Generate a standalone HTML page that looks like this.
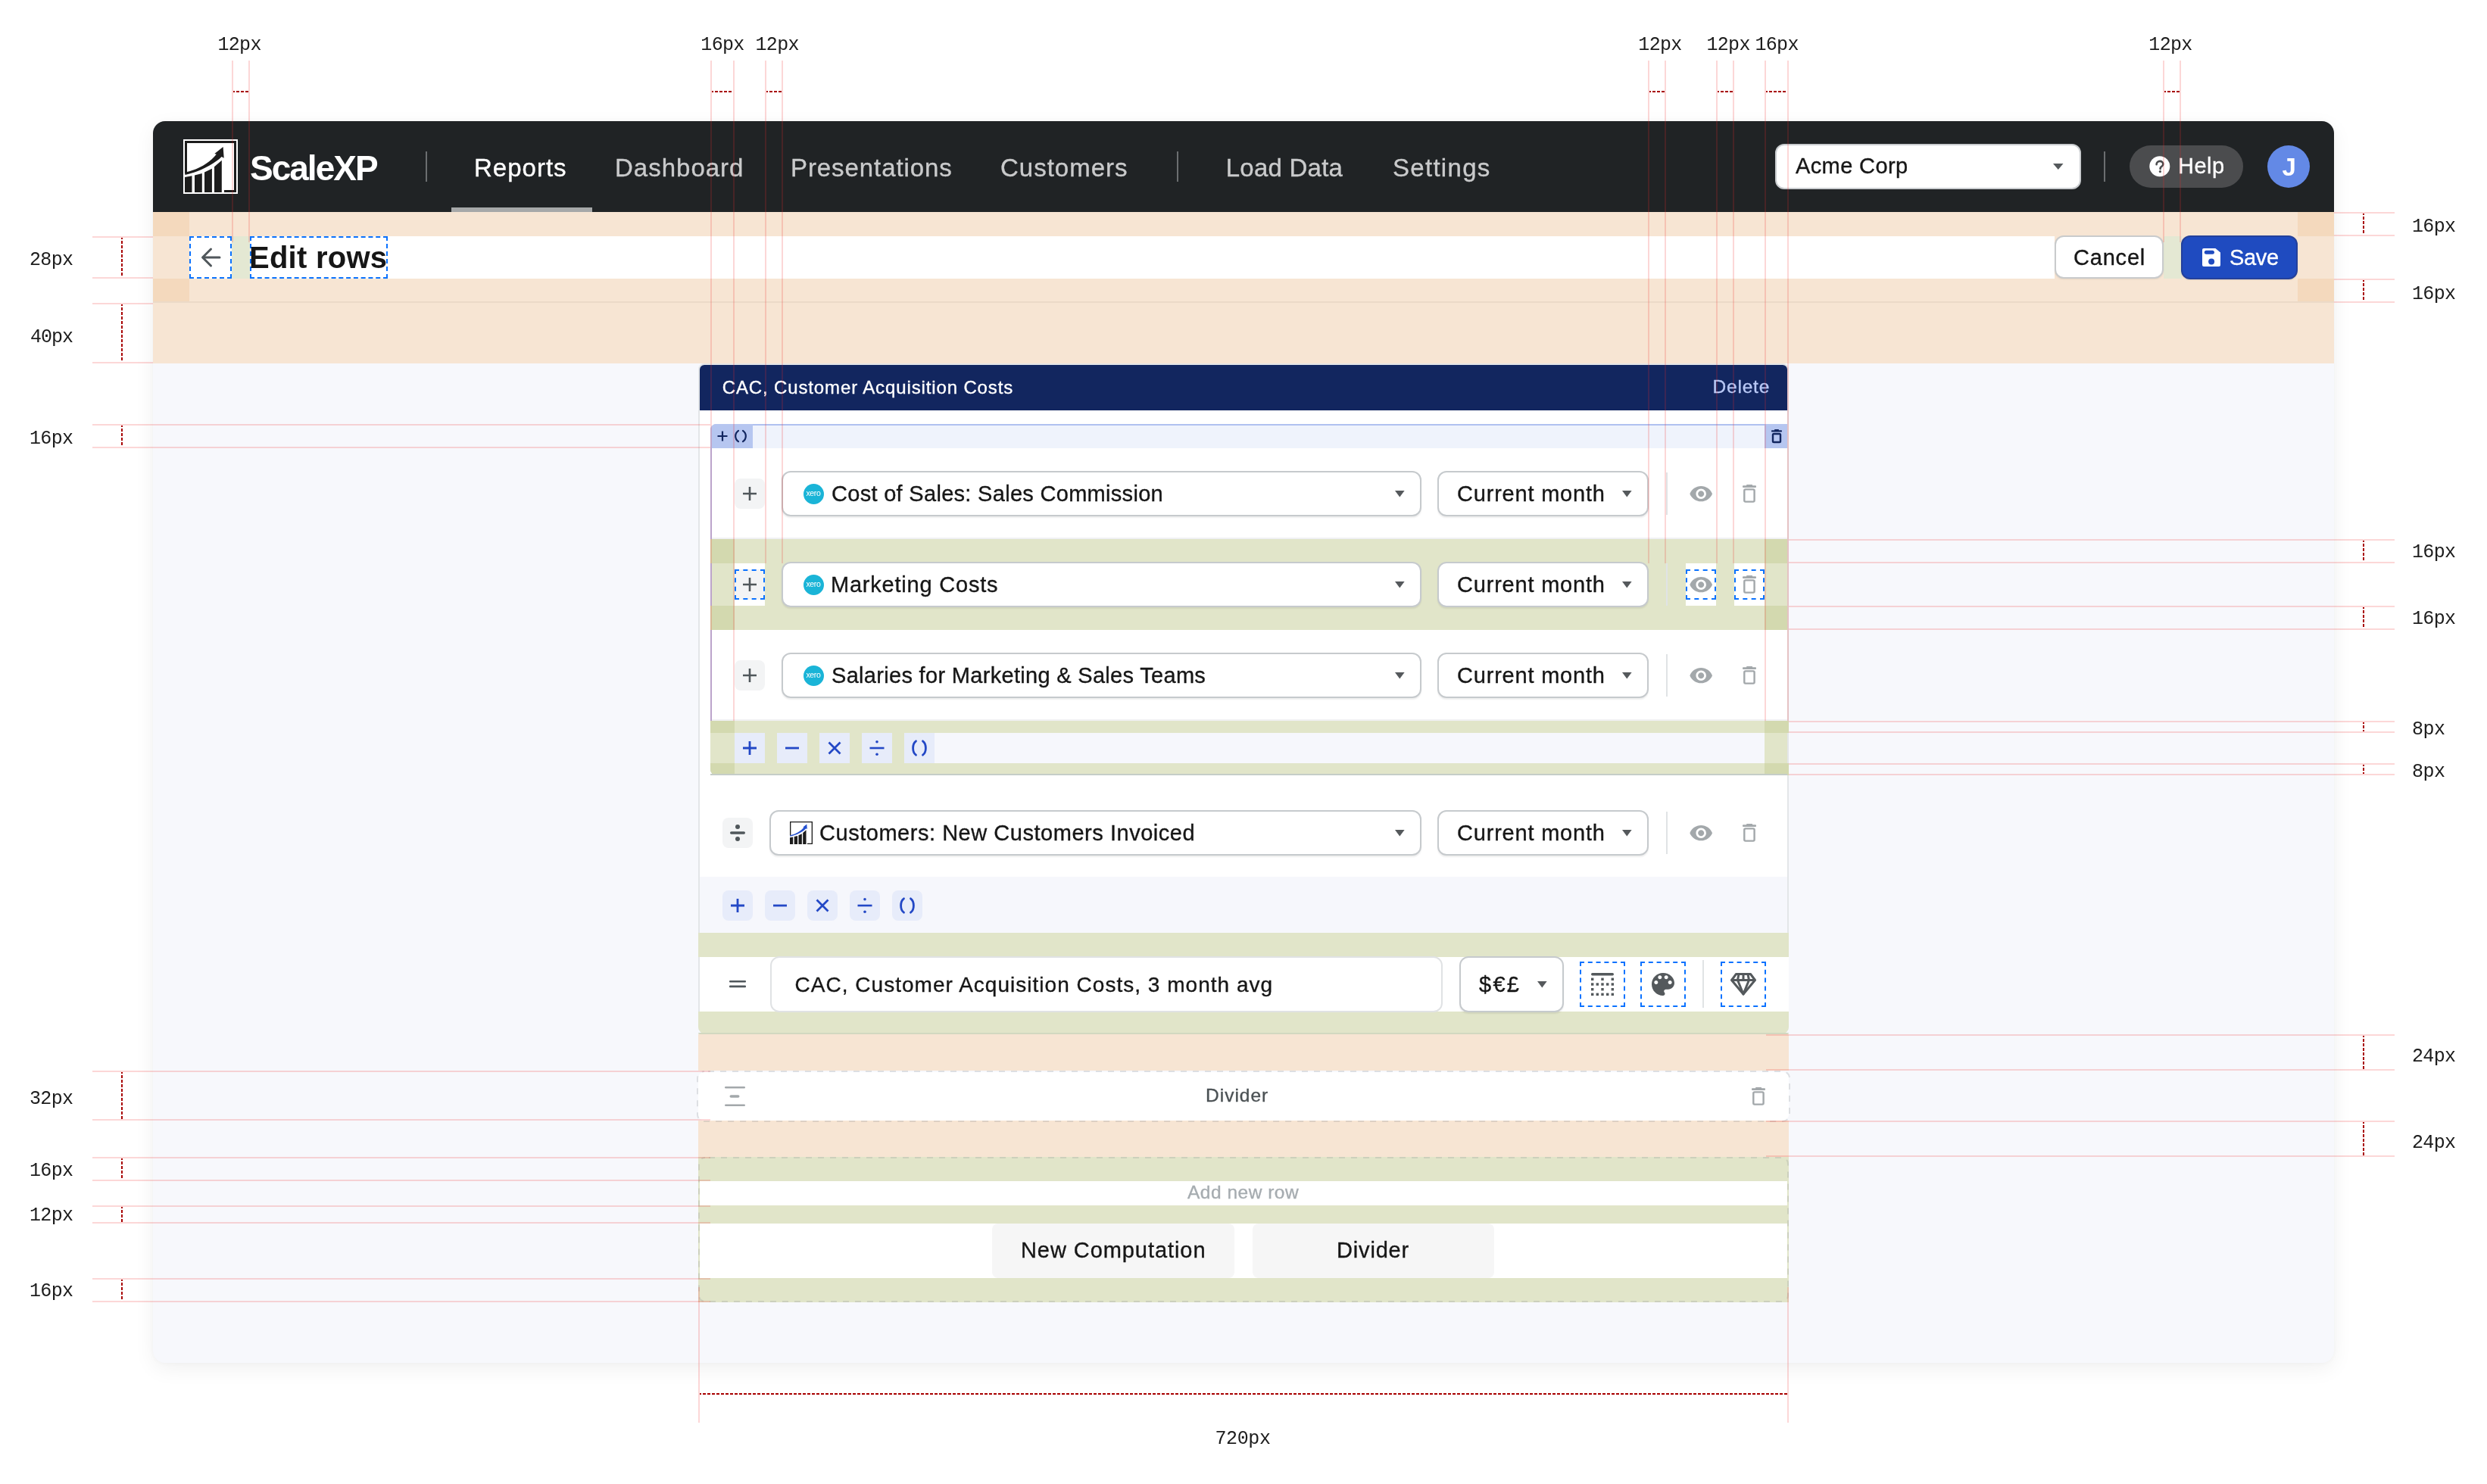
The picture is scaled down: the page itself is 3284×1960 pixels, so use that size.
<!DOCTYPE html>
<html><head><meta charset="utf-8">
<style>
html,body{margin:0;padding:0}
body{width:3284px;height:1960px;position:relative;overflow:hidden;background:#fff;font-family:"Liberation Sans",sans-serif}
.a{position:absolute}
.t{position:absolute;white-space:nowrap;line-height:1;font-family:"Liberation Sans",sans-serif}
.db{position:absolute;box-sizing:border-box;border:2px dashed #0a72ff}
svg{position:absolute;overflow:visible}
</style></head><body>
<div id="root" style="position:absolute;left:0;top:0;width:3284px;height:1960px;background:#fff;will-change:transform;overflow:hidden">
<div class="a" style="left:202px;top:160px;width:2880px;height:1640px;border-radius:16px;background:#f7f8fc;box-shadow:0 8px 28px rgba(0,0,0,0.06),0 0 6px rgba(0,0,0,0.03)"></div>
<div class="a" style="left:202px;top:160px;width:2880px;height:120px;border-radius:16px 16px 0 0;background:#202325"></div>
<svg style="left:242px;top:184px" width="72" height="72" viewBox="0 0 72 72"><rect x="0" y="0" width="72" height="72" fill="#fff"/>
<path fill="#1c1c1c" d="M2 2H70V70H54V67H67V5H5V44H2Z"/>
<path fill="#1c1c1c" d="M2 50L11.5 48.3V70H2Z M15 47.5L24.8 45V70H15Z M28 43.5L37.9 38.7V70H28Z M41 36.2L50.8 27.7V70H41Z"/>
<path fill="#1c1c1c" d="M1.9 43.8C20 40 35 31 43.8 19.8L41.3 18.9L52.6 10.1L53.7 24.8L50.6 22.9C42 32 20 43.5 2.5 46.9Z"/></svg>
<div class="t" style="left:330.00px;top:199.05px;font-size:46px;color:#fff;font-weight:700;letter-spacing:-2.00px;">ScaleXP</div>
<div class="a" style="left:562px;top:200px;width:2px;height:40px;background:#6b6e70"></div>
<div class="a" style="left:596px;top:274px;width:186px;height:6px;background:#a6a8a9"></div>
<div class="t" style="left:626.00px;top:204.56px;font-size:33px;color:#fff;-webkit-text-stroke:0.35px #fff;letter-spacing:1.00px;">Reports</div>
<div class="t" style="left:812.00px;top:204.56px;font-size:33px;color:#c9cacb;-webkit-text-stroke:0.35px #c9cacb;letter-spacing:1.00px;">Dashboard</div>
<div class="t" style="left:1044.00px;top:204.56px;font-size:33px;color:#c9cacb;-webkit-text-stroke:0.35px #c9cacb;letter-spacing:0.92px;">Presentations</div>
<div class="t" style="left:1321.00px;top:204.56px;font-size:33px;color:#c9cacb;-webkit-text-stroke:0.35px #c9cacb;letter-spacing:1.00px;">Customers</div>
<div class="a" style="left:1554px;top:200px;width:2px;height:40px;background:#6b6e70"></div>
<div class="t" style="left:1618.70px;top:204.56px;font-size:33px;color:#c9cacb;-webkit-text-stroke:0.35px #c9cacb;letter-spacing:0.25px;">Load Data</div>
<div class="t" style="left:1839.00px;top:204.56px;font-size:33px;color:#c9cacb;-webkit-text-stroke:0.35px #c9cacb;letter-spacing:1.29px;">Settings</div>
<div class="a" style="left:2344px;top:190px;width:404px;height:60px;box-sizing:border-box;border:2px solid #c9cccf;border-radius:12px;background:#fff"></div>
<div class="t" style="left:2371.00px;top:205.45px;font-size:29px;color:#161616;-webkit-text-stroke:0.35px #161616;letter-spacing:0.38px;">Acme Corp</div>
<svg style="left:2711px;top:216px" width="14" height="9" viewBox="0 0 14 9"><path d="M0 0H13.5L6.75 8Z" fill="#55595c"/></svg>
<div class="a" style="left:2778px;top:200px;width:2px;height:40px;background:#6b6e70"></div>
<div class="a" style="left:2812px;top:192px;width:150px;height:56px;border-radius:28px;background:#4b4c4e"></div>
<svg style="left:2838px;top:206px" width="28" height="28" viewBox="0 0 28 28"><circle cx="13.8" cy="13.8" r="13.5" fill="#fff"/><path d="M9.6 11.2c0-2.6 1.9-4.3 4.4-4.3c2.5 0 4.3 1.6 4.3 3.8c0 1.6-.9 2.6-2.2 3.4c-1.1.7-1.5 1.2-1.5 2.2v.6" fill="none" stroke="#4b4c4e" stroke-width="2.6" stroke-linecap="round"/><circle cx="14.4" cy="20.6" r="1.6" fill="#4b4c4e"/></svg>
<div class="t" style="left:2876.00px;top:205.45px;font-size:29px;color:#fff;-webkit-text-stroke:0.35px #fff;letter-spacing:0.50px;">Help</div>
<div class="a" style="left:2994px;top:192px;width:56px;height:56px;border-radius:50%;background:#6389e6"></div>
<div class="t" style="left:3013.50px;top:204.06px;font-size:33px;color:#fff;font-weight:700;">J</div>
<div class="a" style="left:202px;top:280px;width:2880px;height:200px;background:#f7e5d3"></div>
<div class="a" style="left:202px;top:280px;width:48px;height:32px;background:#f4d9bd"></div>
<div class="a" style="left:202px;top:368px;width:48px;height:30px;background:#f4d9bd"></div>
<div class="a" style="left:3034px;top:280px;width:48px;height:32px;background:#f4d9bd"></div>
<div class="a" style="left:3034px;top:368px;width:48px;height:30px;background:#f4d9bd"></div>
<div class="a" style="left:202px;top:398px;width:2880px;height:2px;background:#ecdac8"></div>
<div class="a" style="left:250px;top:312px;width:2463px;height:56px;background:#fff"></div>
<div class="a" style="left:306px;top:312px;width:24px;height:56px;background:#e4e8d3"></div>
<div class="a" style="left:2857px;top:312px;width:24px;height:56px;background:#e4e8d3"></div>
<div class="db" style="left:250px;top:312px;width:56px;height:56px"></div>
<svg style="left:264px;top:326px" width="28" height="28" viewBox="0 0 28 28"><path d="M26 14H4M14.5 3L3.5 14L14.5 25" fill="none" stroke="#50575b" stroke-width="3" stroke-linecap="round" stroke-linejoin="round"/></svg>
<div class="db" style="left:330px;top:312px;width:182px;height:56px"></div>
<div class="t" style="left:329.00px;top:320.13px;font-size:40px;color:#161616;font-weight:700;letter-spacing:0.25px;">Edit rows</div>
<div class="a" style="left:2713px;top:311px;width:144px;height:57px;box-sizing:border-box;border:2px solid #c9cbcc;border-radius:12px;background:#fff;box-shadow:0 1px 2px rgba(0,0,0,0.08)"></div>
<div class="t" style="left:2738.00px;top:325.85px;font-size:29px;color:#161616;-webkit-text-stroke:0.35px #161616;letter-spacing:0.80px;">Cancel</div>
<div class="a" style="left:2880px;top:311px;width:154px;height:58px;box-sizing:border-box;border:2px solid rgba(40,50,110,0.45);border-radius:12px;background:#1f4bc0;box-shadow:0 1px 2px rgba(0,0,0,0.10)"></div>
<svg style="left:2908px;top:328px" width="24" height="24" viewBox="0 0 24 24"><path fill="#fff" d="M2 0H17.4L24 5.6V22Q24 24 22 24H2Q0 24 0 22V2Q0 0 2 0Z"/><rect x="2.8" y="2.8" width="13.1" height="5" rx="2.5" fill="#1f4bc0"/><circle cx="12.1" cy="17.6" r="4" fill="#1f4bc0"/></svg>
<div class="t" style="left:2944.00px;top:325.85px;font-size:29px;color:#fff;-webkit-text-stroke:0.35px #fff;letter-spacing:-0.33px;">Save</div>
<div class="a" style="left:922px;top:480px;width:1440px;height:886px;box-sizing:border-box;border:2px solid #e3e6e8;border-radius:8px 8px 10px 10px;background:#fff"></div>
<div class="a" style="left:924px;top:482px;width:1436px;height:60px;border-radius:6px 6px 0 0;background:#12265f"></div>
<div class="t" style="left:953.70px;top:499.68px;font-size:24px;color:#fff;-webkit-text-stroke:0.35px #fff;letter-spacing:0.87px;">CAC, Customer Acquisition Costs</div>
<div class="t" style="left:2261.50px;top:499.26px;font-size:24.5px;color:#b8c8f5;-webkit-text-stroke:0.35px #b8c8f5;letter-spacing:0.80px;">Delete</div>
<div class="a" style="left:938px;top:560px;width:1422px;height:464px;box-sizing:border-box;border:2px solid #b0c1f0;border-right:none;border-radius:8px 0 0 8px;background:#fff"></div>
<div class="a" style="left:940px;top:562px;width:1420px;height:30px;background:#eff3fc"></div>
<div class="a" style="left:938px;top:560px;width:56px;height:32px;background:#b6c6f0;border-radius:8px 0 0 0"></div>
<div class="a" style="left:2330px;top:560px;width:30px;height:32px;background:#b6c6f0"></div>
<svg style="left:946px;top:568px" width="16" height="16" viewBox="0 0 16 16"><path d="M8 1.5V14.5M1.5 8H14.5" stroke="#12265f" stroke-width="2.2"/></svg>
<svg style="left:969px;top:567px" width="18" height="18" viewBox="0 0 18 18"><path d="M6 1.8C0.9 5.5 0.9 12.5 6 16.2M12 1.8C17.1 5.5 17.1 12.5 12 16.2" fill="none" stroke="#12265f" stroke-width="2.2" stroke-linecap="round"/></svg>
<svg style="left:2339px;top:567px" width="14" height="18" viewBox="0 0 14 18"><rect x="0" y="1.2" width="14" height="2.4" rx="0.8" fill="#12265f"/><rect x="4" y="0" width="6" height="2" rx="0.8" fill="#12265f"/><rect x="2" y="6" width="10" height="11" rx="1.3" fill="none" stroke="#12265f" stroke-width="2.4"/></svg>
<div class="a" style="left:970px;top:632px;width:40px;height:40px;background:#f3f4f5;border-radius:8px"></div>
<svg style="left:980px;top:642px" width="20" height="20" viewBox="0 0 20 20"><path d="M10 1V19M1 10H19" stroke="#50575b" stroke-width="2.6"/></svg>
<div class="a" style="left:1032px;top:622px;width:845px;height:60px;box-sizing:border-box;border:2px solid #c6cacd;border-radius:12px;background:#fff;box-shadow:0 2px 2px rgba(0,0,0,0.07)"></div>
<div class="a" style="left:1060.5px;top:638.5px;width:27px;height:27px;border-radius:50%;background:#1ab4d7"></div>
<svg style="left:1063px;top:646px" width="22" height="12" viewBox="0 0 22 12"><text x="11" y="8.6" text-anchor="middle" font-family="Liberation Sans" font-size="10.5" fill="#fff" letter-spacing="-0.3">xero</text></svg>
<div class="t" style="left:1098.00px;top:637.95px;font-size:29px;color:#161616;-webkit-text-stroke:0.35px #161616;letter-spacing:0.30px;">Cost of Sales: Sales Commission</div>
<svg style="left:1842px;top:648px" width="13" height="9" viewBox="0 0 13 9"><path d="M0 0H12.6L6.3 8.4Z" fill="#55595c"/></svg>
<div class="a" style="left:1898px;top:622px;width:279px;height:60px;box-sizing:border-box;border:2px solid #c6cacd;border-radius:12px;background:#fff;box-shadow:0 2px 2px rgba(0,0,0,0.07)"></div>
<div class="t" style="left:1924.00px;top:637.95px;font-size:29px;color:#161616;-webkit-text-stroke:0.35px #161616;letter-spacing:0.80px;">Current month</div>
<svg style="left:2142px;top:648px" width="13" height="9" viewBox="0 0 13 9"><path d="M0 0H12.6L6.3 8.4Z" fill="#55595c"/></svg>
<div class="a" style="left:2200px;top:624px;width:2px;height:56px;background:#e0e3e5"></div>
<svg style="left:2229.8px;top:635.8px" width="32.4" height="32.4" viewBox="0 0 24 24"><path fill="#a3a8ab" d="M12 4.5C7 4.5 2.73 7.61 1 12c1.73 4.39 6 7.5 11 7.5s9.27-3.11 11-7.5c-1.73-4.39-6-7.5-11-7.5zM12 17c-2.76 0-5-2.240-5-5s2.24-5 5-5 5 2.24 5 5-2.24 5-5 5zm0-8c-1.66 0-3 1.34-3 3s1.34 3 3 3 3-1.34 3-3-1.34-3-3-3z"/></svg>
<svg style="left:2301px;top:640px" width="18" height="24" viewBox="0 0 18 24"><rect x="0" y="1.3" width="18" height="2.6" rx="1" fill="#a3a8ab"/><rect x="5" y="0" width="8.2" height="2.6" rx="1" fill="#a3a8ab"/><rect x="2.3" y="6.4" width="13.3" height="16.2" rx="1.6" fill="none" stroke="#a3a8ab" stroke-width="2.4"/></svg>
<div class="a" style="left:940px;top:710px;width:1420px;height:2px;background:#f0f1f3"></div>
<div class="a" style="left:940px;top:950px;width:1420px;height:2px;background:#f0f1f3"></div>
<div class="a" style="left:940px;top:712px;width:1420px;height:120px;background:#e1e5c9"></div>
<div class="a" style="left:938px;top:712px;width:32px;height:32px;background:#d3d9af"></div>
<div class="a" style="left:938px;top:800px;width:32px;height:32px;background:#d3d9af"></div>
<div class="a" style="left:2330px;top:712px;width:30px;height:32px;background:#d3d9af"></div>
<div class="a" style="left:2330px;top:800px;width:30px;height:32px;background:#d3d9af"></div>
<div class="a" style="left:970px;top:744px;width:40px;height:56px;background:#fff"></div>
<div class="a" style="left:2226px;top:744px;width:40px;height:56px;background:#fff"></div>
<div class="a" style="left:2290px;top:744px;width:40px;height:56px;background:#fff"></div>
<div class="a" style="left:970px;top:752px;width:40px;height:40px;background:#f3f4f5;border-radius:8px"></div>
<svg style="left:980px;top:762px" width="20" height="20" viewBox="0 0 20 20"><path d="M10 1V19M1 10H19" stroke="#50575b" stroke-width="2.6"/></svg>
<div class="db" style="left:970px;top:752px;width:40px;height:40px"></div>
<div class="a" style="left:1032px;top:742px;width:845px;height:60px;box-sizing:border-box;border:2px solid #c6cacd;border-radius:12px;background:#fff;box-shadow:0 2px 2px rgba(0,0,0,0.07)"></div>
<div class="a" style="left:1060.5px;top:758.5px;width:27px;height:27px;border-radius:50%;background:#1ab4d7"></div>
<svg style="left:1063px;top:766px" width="22" height="12" viewBox="0 0 22 12"><text x="11" y="8.6" text-anchor="middle" font-family="Liberation Sans" font-size="10.5" fill="#fff" letter-spacing="-0.3">xero</text></svg>
<div class="t" style="left:1097.00px;top:757.95px;font-size:29px;color:#161616;-webkit-text-stroke:0.35px #161616;letter-spacing:0.79px;">Marketing Costs</div>
<svg style="left:1842px;top:768px" width="13" height="9" viewBox="0 0 13 9"><path d="M0 0H12.6L6.3 8.4Z" fill="#55595c"/></svg>
<div class="a" style="left:1898px;top:742px;width:279px;height:60px;box-sizing:border-box;border:2px solid #c6cacd;border-radius:12px;background:#fff;box-shadow:0 2px 2px rgba(0,0,0,0.07)"></div>
<div class="t" style="left:1924.00px;top:757.95px;font-size:29px;color:#161616;-webkit-text-stroke:0.35px #161616;letter-spacing:0.80px;">Current month</div>
<svg style="left:2142px;top:768px" width="13" height="9" viewBox="0 0 13 9"><path d="M0 0H12.6L6.3 8.4Z" fill="#55595c"/></svg>
<div class="a" style="left:2200px;top:744px;width:2px;height:56px;background:#e0e3e5"></div>
<svg style="left:2229.8px;top:755.8px" width="32.4" height="32.4" viewBox="0 0 24 24"><path fill="#a3a8ab" d="M12 4.5C7 4.5 2.73 7.61 1 12c1.73 4.39 6 7.5 11 7.5s9.27-3.11 11-7.5c-1.73-4.39-6-7.5-11-7.5zM12 17c-2.76 0-5-2.240-5-5s2.24-5 5-5 5 2.24 5 5-2.24 5-5 5zm0-8c-1.66 0-3 1.34-3 3s1.34 3 3 3 3-1.34 3-3-1.34-3-3-3z"/></svg>
<svg style="left:2301px;top:760px" width="18" height="24" viewBox="0 0 18 24"><rect x="0" y="1.3" width="18" height="2.6" rx="1" fill="#a3a8ab"/><rect x="5" y="0" width="8.2" height="2.6" rx="1" fill="#a3a8ab"/><rect x="2.3" y="6.4" width="13.3" height="16.2" rx="1.6" fill="none" stroke="#a3a8ab" stroke-width="2.4"/></svg>
<div class="db" style="left:2226px;top:752px;width:40px;height:40px"></div>
<div class="db" style="left:2290px;top:752px;width:40px;height:40px"></div>
<div class="a" style="left:970px;top:872px;width:40px;height:40px;background:#f3f4f5;border-radius:8px"></div>
<svg style="left:980px;top:882px" width="20" height="20" viewBox="0 0 20 20"><path d="M10 1V19M1 10H19" stroke="#50575b" stroke-width="2.6"/></svg>
<div class="a" style="left:1032px;top:862px;width:845px;height:60px;box-sizing:border-box;border:2px solid #c6cacd;border-radius:12px;background:#fff;box-shadow:0 2px 2px rgba(0,0,0,0.07)"></div>
<div class="a" style="left:1060.5px;top:878.5px;width:27px;height:27px;border-radius:50%;background:#1ab4d7"></div>
<svg style="left:1063px;top:886px" width="22" height="12" viewBox="0 0 22 12"><text x="11" y="8.6" text-anchor="middle" font-family="Liberation Sans" font-size="10.5" fill="#fff" letter-spacing="-0.3">xero</text></svg>
<div class="t" style="left:1098.00px;top:877.95px;font-size:29px;color:#161616;-webkit-text-stroke:0.35px #161616;letter-spacing:0.31px;">Salaries for Marketing &amp; Sales Teams</div>
<svg style="left:1842px;top:888px" width="13" height="9" viewBox="0 0 13 9"><path d="M0 0H12.6L6.3 8.4Z" fill="#55595c"/></svg>
<div class="a" style="left:1898px;top:862px;width:279px;height:60px;box-sizing:border-box;border:2px solid #c6cacd;border-radius:12px;background:#fff;box-shadow:0 2px 2px rgba(0,0,0,0.07)"></div>
<div class="t" style="left:1924.00px;top:877.95px;font-size:29px;color:#161616;-webkit-text-stroke:0.35px #161616;letter-spacing:0.80px;">Current month</div>
<svg style="left:2142px;top:888px" width="13" height="9" viewBox="0 0 13 9"><path d="M0 0H12.6L6.3 8.4Z" fill="#55595c"/></svg>
<div class="a" style="left:2200px;top:864px;width:2px;height:56px;background:#e0e3e5"></div>
<svg style="left:2229.8px;top:875.8px" width="32.4" height="32.4" viewBox="0 0 24 24"><path fill="#a3a8ab" d="M12 4.5C7 4.5 2.73 7.61 1 12c1.73 4.39 6 7.5 11 7.5s9.27-3.11 11-7.5c-1.73-4.39-6-7.5-11-7.5zM12 17c-2.76 0-5-2.240-5-5s2.24-5 5-5 5 2.24 5 5-2.24 5-5 5zm0-8c-1.66 0-3 1.34-3 3s1.34 3 3 3 3-1.34 3-3-1.34-3-3-3z"/></svg>
<svg style="left:2301px;top:880px" width="18" height="24" viewBox="0 0 18 24"><rect x="0" y="1.3" width="18" height="2.6" rx="1" fill="#a3a8ab"/><rect x="5" y="0" width="8.2" height="2.6" rx="1" fill="#a3a8ab"/><rect x="2.3" y="6.4" width="13.3" height="16.2" rx="1.6" fill="none" stroke="#a3a8ab" stroke-width="2.4"/></svg>
<div class="a" style="left:938px;top:952px;width:1422px;height:72px;background:#e1e5c9;border-radius:0 0 0 8px"></div>
<div class="a" style="left:938px;top:952px;width:32px;height:16px;background:#d3d9af"></div>
<div class="a" style="left:938px;top:1008px;width:32px;height:16px;background:#d3d9af;border-radius:0 0 0 8px"></div>
<div class="a" style="left:2330px;top:952px;width:32px;height:16px;background:#d3d9af"></div>
<div class="a" style="left:2330px;top:1008px;width:32px;height:16px;background:#d3d9af"></div>
<div class="a" style="left:1234px;top:968px;width:1096px;height:40px;background:#f6f7fc"></div>
<div class="a" style="left:938px;top:1022px;width:1422px;height:2px;background:#c5cdc8"></div>
<div class="a" style="left:970px;top:968px;width:40px;height:40px;background:#e7ecfa;border-radius:0"></div>
<svg style="left:980px;top:978px" width="20" height="20" viewBox="0 0 20 20"><path d="M10 1V19M1 10H19" stroke="#2348c6" stroke-width="2.8"/></svg>
<div class="a" style="left:1026px;top:968px;width:40px;height:40px;background:#e7ecfa;border-radius:0"></div>
<svg style="left:1036px;top:978px" width="20" height="20" viewBox="0 0 20 20"><path d="M1 10H19" stroke="#2348c6" stroke-width="2.8"/></svg>
<div class="a" style="left:1082px;top:968px;width:40px;height:40px;background:#e7ecfa;border-radius:0"></div>
<svg style="left:1092px;top:978px" width="20" height="20" viewBox="0 0 20 20"><path d="M2.5 2.5L17.5 17.5M17.5 2.5L2.5 17.5" stroke="#2348c6" stroke-width="2.8"/></svg>
<div class="a" style="left:1138px;top:968px;width:40px;height:40px;background:#e7ecfa;border-radius:0"></div>
<svg style="left:1148px;top:978px" width="20" height="20" viewBox="0 0 20 20"><circle cx="10" cy="1.8" r="1.8" fill="#2348c6"/><circle cx="10" cy="18.2" r="1.8" fill="#2348c6"/><path d="M0.5 10H19.5" stroke="#2348c6" stroke-width="2.6"/></svg>
<div class="a" style="left:1194px;top:968px;width:40px;height:40px;background:#e7ecfa;border-radius:0"></div>
<svg style="left:1204px;top:978px" width="20" height="20" viewBox="0 0 20 20"><path d="M5.5 0.8C0.3 4.5 0.3 15.5 5.5 19.2M14.5 0.8C19.7 4.5 19.7 15.5 14.5 19.2" fill="none" stroke="#2348c6" stroke-width="2.8" stroke-linecap="round"/></svg>
<div class="a" style="left:954px;top:1080px;width:40px;height:40px;background:#f3f4f5;border-radius:8px"></div>
<svg style="left:963px;top:1089px" width="22" height="22" viewBox="0 0 22 22"><circle cx="11" cy="3" r="3" fill="#50575b"/><circle cx="11" cy="19" r="3" fill="#50575b"/><rect x="1" y="9.3" width="20" height="3.4" rx="1.7" fill="#50575b"/></svg>
<div class="a" style="left:1016px;top:1070px;width:861px;height:60px;box-sizing:border-box;border:2px solid #c6cacd;border-radius:12px;background:#fff;box-shadow:0 2px 2px rgba(0,0,0,0.07)"></div>
<svg style="left:1043px;top:1085px" width="30" height="30" viewBox="0 0 30 30"><g transform="scale(0.4412) translate(-2 -2)">
<path fill="#1c1c1c" d="M2 2H70V70H54V67H67V5H5V44H2Z"/>
<path fill="#1c1c1c" d="M2 50L11.5 48.3V70H2Z M15 47.5L24.8 45V70H15Z M28 43.5L37.9 38.7V70H28Z M41 36.2L50.8 27.7V70H41Z"/>
<path fill="#2450d0" d="M1.9 43.8C20 40 35 31 43.8 19.8L41.3 18.9L52.6 10.1L53.7 24.8L50.6 22.9C42 32 20 43.5 2.5 46.9Z"/></g></svg>
<div class="t" style="left:1082.00px;top:1085.95px;font-size:29px;color:#161616;-webkit-text-stroke:0.35px #161616;letter-spacing:0.53px;">Customers: New Customers Invoiced</div>
<svg style="left:1842px;top:1096px" width="13" height="9" viewBox="0 0 13 9"><path d="M0 0H12.6L6.3 8.4Z" fill="#55595c"/></svg>
<div class="a" style="left:1898px;top:1070px;width:279px;height:60px;box-sizing:border-box;border:2px solid #c6cacd;border-radius:12px;background:#fff;box-shadow:0 2px 2px rgba(0,0,0,0.07)"></div>
<div class="t" style="left:1924.00px;top:1085.95px;font-size:29px;color:#161616;-webkit-text-stroke:0.35px #161616;letter-spacing:0.80px;">Current month</div>
<svg style="left:2142px;top:1096px" width="13" height="9" viewBox="0 0 13 9"><path d="M0 0H12.6L6.3 8.4Z" fill="#55595c"/></svg>
<div class="a" style="left:2200px;top:1072px;width:2px;height:56px;background:#e0e3e5"></div>
<svg style="left:2229.8px;top:1083.8px" width="32.4" height="32.4" viewBox="0 0 24 24"><path fill="#a3a8ab" d="M12 4.5C7 4.5 2.73 7.61 1 12c1.73 4.39 6 7.5 11 7.5s9.27-3.11 11-7.5c-1.73-4.39-6-7.5-11-7.5zM12 17c-2.76 0-5-2.240-5-5s2.24-5 5-5 5 2.24 5 5-2.24 5-5 5zm0-8c-1.66 0-3 1.34-3 3s1.34 3 3 3 3-1.34 3-3-1.34-3-3-3z"/></svg>
<svg style="left:2301px;top:1088px" width="18" height="24" viewBox="0 0 18 24"><rect x="0" y="1.3" width="18" height="2.6" rx="1" fill="#a3a8ab"/><rect x="5" y="0" width="8.2" height="2.6" rx="1" fill="#a3a8ab"/><rect x="2.3" y="6.4" width="13.3" height="16.2" rx="1.6" fill="none" stroke="#a3a8ab" stroke-width="2.4"/></svg>
<div class="a" style="left:924px;top:1158px;width:1436px;height:74px;background:#f6f7fc"></div>
<div class="a" style="left:954px;top:1176px;width:40px;height:40px;background:#e7ecfa;border-radius:8px"></div>
<svg style="left:964px;top:1186px" width="20" height="20" viewBox="0 0 20 20"><path d="M10 1V19M1 10H19" stroke="#2348c6" stroke-width="2.8"/></svg>
<div class="a" style="left:1010px;top:1176px;width:40px;height:40px;background:#e7ecfa;border-radius:8px"></div>
<svg style="left:1020px;top:1186px" width="20" height="20" viewBox="0 0 20 20"><path d="M1 10H19" stroke="#2348c6" stroke-width="2.8"/></svg>
<div class="a" style="left:1066px;top:1176px;width:40px;height:40px;background:#e7ecfa;border-radius:8px"></div>
<svg style="left:1076px;top:1186px" width="20" height="20" viewBox="0 0 20 20"><path d="M2.5 2.5L17.5 17.5M17.5 2.5L2.5 17.5" stroke="#2348c6" stroke-width="2.8"/></svg>
<div class="a" style="left:1122px;top:1176px;width:40px;height:40px;background:#e7ecfa;border-radius:8px"></div>
<svg style="left:1132px;top:1186px" width="20" height="20" viewBox="0 0 20 20"><circle cx="10" cy="1.8" r="1.8" fill="#2348c6"/><circle cx="10" cy="18.2" r="1.8" fill="#2348c6"/><path d="M0.5 10H19.5" stroke="#2348c6" stroke-width="2.6"/></svg>
<div class="a" style="left:1178px;top:1176px;width:40px;height:40px;background:#e7ecfa;border-radius:8px"></div>
<svg style="left:1188px;top:1186px" width="20" height="20" viewBox="0 0 20 20"><path d="M5.5 0.8C0.3 4.5 0.3 15.5 5.5 19.2M14.5 0.8C19.7 4.5 19.7 15.5 14.5 19.2" fill="none" stroke="#2348c6" stroke-width="2.8" stroke-linecap="round"/></svg>
<div class="a" style="left:922px;top:1232px;width:1440px;height:134px;background:#e1e5c9;border-radius:0 0 10px 10px"></div>
<div class="a" style="left:922px;top:1364px;width:1440px;height:2px;background:#d2d8c0;border-radius:0 0 10px 10px"></div>
<div class="a" style="left:922px;top:1264px;width:1440px;height:72px;background:#fff"></div>
<div class="a" style="left:922px;top:1264px;width:2px;height:72px;background:#e3e6e8"></div>
<svg style="left:963px;top:1295px" width="22" height="10" viewBox="0 0 22 10"><rect x="0" y="0" width="22" height="2.6" rx="1" fill="#50575b"/><rect x="0" y="6.6" width="22" height="2.6" rx="1" fill="#50575b"/></svg>
<div class="a" style="left:1017px;top:1263px;width:888px;height:74px;box-sizing:border-box;border:2px solid #e0e2e4;border-radius:12px;background:#fff"></div>
<div class="t" style="left:1049.60px;top:1287.29px;font-size:28px;color:#161616;-webkit-text-stroke:0.35px #161616;letter-spacing:1.02px;">CAC, Customer Acquisition Costs, 3 month avg</div>
<div class="a" style="left:1927px;top:1263px;width:138px;height:74px;box-sizing:border-box;border:2px solid #c6cacd;border-radius:12px;background:#fff;box-shadow:0 2px 2px rgba(0,0,0,0.07)"></div>
<div class="t" style="left:1953.00px;top:1285.75px;font-size:29px;color:#161616;-webkit-text-stroke:0.35px #161616;letter-spacing:2.30px;">$€£</div>
<svg style="left:2030px;top:1296px" width="13" height="9" viewBox="0 0 13 9"><path d="M0 0H12.6L6.3 8.4Z" fill="#55595c"/></svg>
<div class="db" style="left:2086px;top:1270px;width:60px;height:60px"></div>
<div class="db" style="left:2166px;top:1270px;width:60px;height:60px"></div>
<div class="db" style="left:2272px;top:1270px;width:60px;height:60px"></div>
<div class="a" style="left:2248px;top:1268px;width:2px;height:63px;background:#e0e3e5"></div>
<svg style="left:2101px;top:1285px" width="30" height="30" viewBox="0 0 30 30"><g fill="#54595c"><rect x="0" y="0" width="30" height="3.4" rx="1.7"/><rect x="0" y="6.6" width="3.4" height="3.4"/><rect x="13.3" y="6.6" width="3.4" height="3.4"/><rect x="26.6" y="6.6" width="3.4" height="3.4"/><rect x="0" y="13.3" width="3.4" height="3.4"/><rect x="6.6" y="13.3" width="3.4" height="3.4"/><rect x="13.3" y="13.3" width="3.4" height="3.4"/><rect x="20" y="13.3" width="3.4" height="3.4"/><rect x="26.6" y="13.3" width="3.4" height="3.4"/><rect x="0" y="20" width="3.4" height="3.4"/><rect x="13.3" y="20" width="3.4" height="3.4"/><rect x="26.6" y="20" width="3.4" height="3.4"/><rect x="0" y="26.6" width="3.4" height="3.4"/><rect x="6.6" y="26.6" width="3.4" height="3.4"/><rect x="13.3" y="26.6" width="3.4" height="3.4"/><rect x="20" y="26.6" width="3.4" height="3.4"/><rect x="26.6" y="26.6" width="3.4" height="3.4"/></g></svg>
<svg style="left:2176px;top:1280px" width="40" height="40" viewBox="0 0 24 24"><path fill="#54595c" d="M12 3c-4.97 0-9 4.03-9 9s4.03 9 9 9c.83 0 1.5-.67 1.5-1.5 0-.39-.15-.74-.39-1.01-.23-.26-.38-.61-.38-.99 0-.83.67-1.5 1.5-1.5H16c2.76 0 5-2.24 5-5 0-4.420-4.03-8-9-8zm-5.5 9c-.83 0-1.5-.67-1.5-1.5S5.67 9 6.5 9 8 9.67 8 10.5 7.33 12 6.5 12zm3-4C8.67 8 8 7.33 8 6.5S8.67 5 9.5 5s1.5.67 1.5 1.5S10.33 8 9.5 8zm5 0c-.83 0-1.5-.67-1.5-1.5S13.67 5 14.5 5s1.5.67 1.5 1.5S15.330 8 14.5 8zm3 4c-.83 0-1.5-.67-1.5-1.5S16.670 9 17.5 9s1.5.67 1.5 1.5-.67 1.5-1.5 1.5z"/></svg>
<svg style="left:2285px;top:1285px" width="34" height="30" viewBox="0 0 34 30"><g fill="none" stroke="#54595c" stroke-width="3" stroke-linejoin="round"><path d="M7.5 1.5H26.5L32.5 9.5L17 28L1.5 9.5Z"/><path d="M1.5 9.5H32.5M11 1.5L9.5 9.5L17 28L24.5 9.5L23 1.5M17 1.5V9.5"/></g></svg>
<div class="a" style="left:922px;top:1366px;width:1440px;height:48px;background:#f7e5d3"></div>
<div class="a" style="left:922px;top:1480px;width:1440px;height:48px;background:#f7e5d3"></div>
<div class="a" style="left:922px;top:1416px;width:1440px;height:64px;border-radius:8px;background:#fff"></div>
<svg style="left:920px;top:1414px" width="1444" height="68" viewBox="0 0 1444 68"><rect x="1" y="1" width="1442" height="66" rx="9" fill="none" stroke="rgba(130,135,140,0.22)" stroke-width="2" stroke-dasharray="8 8" stroke-dashoffset="-5"/></svg>
<svg style="left:957px;top:1434px" width="27" height="28" viewBox="0 0 27 28"><rect x="0" y="1" width="27" height="2.6" rx="1.3" fill="#a3a8ab"/><rect x="6.5" y="12.2" width="13" height="3.6" rx="1.8" fill="#a3a8ab"/><rect x="0" y="24.4" width="27" height="2.6" rx="1.3" fill="#a3a8ab"/></svg>
<div class="t" style="left:1592.00px;top:1434.96px;font-size:24.5px;color:#4b5154;-webkit-text-stroke:0.35px #4b5154;letter-spacing:1.00px;">Divider</div>
<svg style="left:2313px;top:1436px" width="18" height="24" viewBox="0 0 18 24"><rect x="0" y="1.3" width="18" height="2.6" rx="1" fill="#a3a8ab"/><rect x="5" y="0" width="8.2" height="2.6" rx="1" fill="#a3a8ab"/><rect x="2.3" y="6.4" width="13.3" height="16.2" rx="1.6" fill="none" stroke="#a3a8ab" stroke-width="2.4"/></svg>
<div class="a" style="left:922px;top:1528px;width:1440px;height:192px;background:#e1e5c9"></div>
<div class="a" style="left:924px;top:1560px;width:1436px;height:32px;background:#fff"></div>
<div class="a" style="left:924px;top:1616px;width:1436px;height:72px;background:#fff"></div>
<div class="t" style="left:1568.00px;top:1563.26px;font-size:24.5px;color:#a6acb0;-webkit-text-stroke:0.35px #a6acb0;letter-spacing:0.50px;">Add new row</div>
<div class="a" style="left:1310px;top:1616px;width:320px;height:72px;background:#f6f6f6;border-radius:8px"></div>
<div class="a" style="left:1654px;top:1616px;width:319px;height:72px;background:#f6f6f6;border-radius:8px"></div>
<div class="t" style="left:1348.00px;top:1637.45px;font-size:29px;color:#161616;-webkit-text-stroke:0.35px #161616;letter-spacing:0.93px;">New Computation</div>
<div class="t" style="left:1765.00px;top:1637.45px;font-size:29px;color:#161616;-webkit-text-stroke:0.35px #161616;letter-spacing:0.83px;">Divider</div>
<svg style="left:922px;top:1528px" width="1440" height="192" viewBox="0 0 1440 192"><rect x="1" y="1" width="1438" height="190" rx="8" fill="none" stroke="rgba(130,135,140,0.22)" stroke-width="2" stroke-dasharray="8 8" stroke-dashoffset="-5"/></svg>
<div class="a" style="left:306px;top:80px;width:2px;height:240px;background:rgba(240,40,40,0.19)"></div>
<div class="a" style="left:328px;top:80px;width:2px;height:240px;background:rgba(240,40,40,0.19)"></div>
<div class="a" style="left:308px;top:120px;width:20px;height:2px;background:repeating-linear-gradient(90deg,#a80000 0 2px,transparent 2px 4px,#a80000 4px 6px)"></div>
<div class="t" style="left:287.40px;top:46.85px;font-size:25px;color:#1c1c1c;letter-spacing:-0.67px;font-family:'Liberation Mono',monospace;">12px</div>
<div class="a" style="left:938px;top:80px;width:2px;height:872px;background:rgba(240,40,40,0.19)"></div>
<div class="a" style="left:968px;top:80px;width:2px;height:872px;background:rgba(240,40,40,0.19)"></div>
<div class="a" style="left:940px;top:120px;width:28px;height:2px;background:repeating-linear-gradient(90deg,#a80000 0 2px,transparent 2px 4px,#a80000 4px 6px)"></div>
<div class="t" style="left:925.30px;top:46.85px;font-size:25px;color:#1c1c1c;letter-spacing:-0.67px;font-family:'Liberation Mono',monospace;">16px</div>
<div class="a" style="left:1010px;top:80px;width:2px;height:664px;background:rgba(240,40,40,0.19)"></div>
<div class="a" style="left:1032px;top:80px;width:2px;height:664px;background:rgba(240,40,40,0.19)"></div>
<div class="a" style="left:1012px;top:120px;width:20px;height:2px;background:repeating-linear-gradient(90deg,#a80000 0 2px,transparent 2px 4px,#a80000 4px 6px)"></div>
<div class="t" style="left:997.50px;top:46.85px;font-size:25px;color:#1c1c1c;letter-spacing:-0.67px;font-family:'Liberation Mono',monospace;">12px</div>
<div class="a" style="left:2176px;top:80px;width:2px;height:664px;background:rgba(240,40,40,0.19)"></div>
<div class="a" style="left:2198px;top:80px;width:2px;height:664px;background:rgba(240,40,40,0.19)"></div>
<div class="a" style="left:2178px;top:120px;width:20px;height:2px;background:repeating-linear-gradient(90deg,#a80000 0 2px,transparent 2px 4px,#a80000 4px 6px)"></div>
<div class="t" style="left:2163.30px;top:46.85px;font-size:25px;color:#1c1c1c;letter-spacing:-0.67px;font-family:'Liberation Mono',monospace;">12px</div>
<div class="a" style="left:2266px;top:80px;width:2px;height:664px;background:rgba(240,40,40,0.19)"></div>
<div class="a" style="left:2288px;top:80px;width:2px;height:664px;background:rgba(240,40,40,0.19)"></div>
<div class="a" style="left:2268px;top:120px;width:20px;height:2px;background:repeating-linear-gradient(90deg,#a80000 0 2px,transparent 2px 4px,#a80000 4px 6px)"></div>
<div class="t" style="left:2253.40px;top:46.85px;font-size:25px;color:#1c1c1c;letter-spacing:-0.67px;font-family:'Liberation Mono',monospace;">12px</div>
<div class="a" style="left:2330px;top:80px;width:2px;height:872px;background:rgba(240,40,40,0.19)"></div>
<div class="a" style="left:2360px;top:80px;width:2px;height:872px;background:rgba(240,40,40,0.19)"></div>
<div class="a" style="left:2332px;top:120px;width:28px;height:2px;background:repeating-linear-gradient(90deg,#a80000 0 2px,transparent 2px 4px,#a80000 4px 6px)"></div>
<div class="t" style="left:2317.40px;top:46.85px;font-size:25px;color:#1c1c1c;letter-spacing:-0.67px;font-family:'Liberation Mono',monospace;">16px</div>
<div class="a" style="left:2856px;top:80px;width:2px;height:240px;background:rgba(240,40,40,0.19)"></div>
<div class="a" style="left:2878px;top:80px;width:2px;height:240px;background:rgba(240,40,40,0.19)"></div>
<div class="a" style="left:2858px;top:120px;width:20px;height:2px;background:repeating-linear-gradient(90deg,#a80000 0 2px,transparent 2px 4px,#a80000 4px 6px)"></div>
<div class="t" style="left:2837.30px;top:46.85px;font-size:25px;color:#1c1c1c;letter-spacing:-0.67px;font-family:'Liberation Mono',monospace;">12px</div>
<div class="a" style="left:122px;top:312px;width:80px;height:2px;background:rgba(240,40,40,0.19)"></div>
<div class="a" style="left:122px;top:366px;width:80px;height:2px;background:rgba(240,40,40,0.19)"></div>
<div class="a" style="left:160px;top:314px;width:2px;height:52px;background:repeating-linear-gradient(180deg,#a80000 0 2px,transparent 2px 4px,#a80000 4px 6px)"></div>
<div class="t" style="left:39.00px;top:330.85px;font-size:25px;color:#1c1c1c;letter-spacing:-0.67px;font-family:'Liberation Mono',monospace;">28px</div>
<div class="a" style="left:122px;top:400px;width:80px;height:2px;background:rgba(240,40,40,0.19)"></div>
<div class="a" style="left:122px;top:478px;width:80px;height:2px;background:rgba(240,40,40,0.19)"></div>
<div class="a" style="left:160px;top:402px;width:2px;height:76px;background:repeating-linear-gradient(180deg,#a80000 0 2px,transparent 2px 4px,#a80000 4px 6px)"></div>
<div class="t" style="left:40.00px;top:433.35px;font-size:25px;color:#1c1c1c;letter-spacing:-1.00px;font-family:'Liberation Mono',monospace;">40px</div>
<div class="a" style="left:122px;top:560px;width:816px;height:2px;background:rgba(240,40,40,0.19)"></div>
<div class="a" style="left:122px;top:590px;width:816px;height:2px;background:rgba(240,40,40,0.19)"></div>
<div class="a" style="left:160px;top:562px;width:2px;height:28px;background:repeating-linear-gradient(180deg,#a80000 0 2px,transparent 2px 4px,#a80000 4px 6px)"></div>
<div class="t" style="left:39.00px;top:566.85px;font-size:25px;color:#1c1c1c;letter-spacing:-0.67px;font-family:'Liberation Mono',monospace;">16px</div>
<div class="a" style="left:122px;top:1414px;width:816px;height:2px;background:rgba(240,40,40,0.19)"></div>
<div class="a" style="left:122px;top:1478px;width:816px;height:2px;background:rgba(240,40,40,0.19)"></div>
<div class="a" style="left:160px;top:1416px;width:2px;height:62px;background:repeating-linear-gradient(180deg,#a80000 0 2px,transparent 2px 4px,#a80000 4px 6px)"></div>
<div class="t" style="left:39.00px;top:1439.35px;font-size:25px;color:#1c1c1c;letter-spacing:-0.67px;font-family:'Liberation Mono',monospace;">32px</div>
<div class="a" style="left:122px;top:1528px;width:816px;height:2px;background:rgba(240,40,40,0.19)"></div>
<div class="a" style="left:122px;top:1558px;width:816px;height:2px;background:rgba(240,40,40,0.19)"></div>
<div class="a" style="left:160px;top:1530px;width:2px;height:28px;background:repeating-linear-gradient(180deg,#a80000 0 2px,transparent 2px 4px,#a80000 4px 6px)"></div>
<div class="t" style="left:39.00px;top:1533.85px;font-size:25px;color:#1c1c1c;letter-spacing:-0.67px;font-family:'Liberation Mono',monospace;">16px</div>
<div class="a" style="left:122px;top:1592px;width:816px;height:2px;background:rgba(240,40,40,0.19)"></div>
<div class="a" style="left:122px;top:1614px;width:816px;height:2px;background:rgba(240,40,40,0.19)"></div>
<div class="a" style="left:160px;top:1594px;width:2px;height:20px;background:repeating-linear-gradient(180deg,#a80000 0 2px,transparent 2px 4px,#a80000 4px 6px)"></div>
<div class="t" style="left:39.00px;top:1593.35px;font-size:25px;color:#1c1c1c;letter-spacing:-0.67px;font-family:'Liberation Mono',monospace;">12px</div>
<div class="a" style="left:122px;top:1688px;width:816px;height:2px;background:rgba(240,40,40,0.19)"></div>
<div class="a" style="left:122px;top:1718px;width:816px;height:2px;background:rgba(240,40,40,0.19)"></div>
<div class="a" style="left:160px;top:1690px;width:2px;height:28px;background:repeating-linear-gradient(180deg,#a80000 0 2px,transparent 2px 4px,#a80000 4px 6px)"></div>
<div class="t" style="left:39.00px;top:1692.85px;font-size:25px;color:#1c1c1c;letter-spacing:-0.67px;font-family:'Liberation Mono',monospace;">16px</div>
<div class="a" style="left:3082px;top:280px;width:80px;height:2px;background:rgba(240,40,40,0.19)"></div>
<div class="a" style="left:3082px;top:310px;width:80px;height:2px;background:rgba(240,40,40,0.19)"></div>
<div class="a" style="left:3120px;top:282px;width:2px;height:28px;background:repeating-linear-gradient(180deg,#a80000 0 2px,transparent 2px 4px,#a80000 4px 6px)"></div>
<div class="t" style="left:3185.00px;top:287.35px;font-size:25px;color:#1c1c1c;letter-spacing:-0.67px;font-family:'Liberation Mono',monospace;">16px</div>
<div class="a" style="left:3082px;top:368px;width:80px;height:2px;background:rgba(240,40,40,0.19)"></div>
<div class="a" style="left:3082px;top:398px;width:80px;height:2px;background:rgba(240,40,40,0.19)"></div>
<div class="a" style="left:3120px;top:370px;width:2px;height:28px;background:repeating-linear-gradient(180deg,#a80000 0 2px,transparent 2px 4px,#a80000 4px 6px)"></div>
<div class="t" style="left:3185.00px;top:375.85px;font-size:25px;color:#1c1c1c;letter-spacing:-0.67px;font-family:'Liberation Mono',monospace;">16px</div>
<div class="a" style="left:2362px;top:712px;width:800px;height:2px;background:rgba(240,40,40,0.19)"></div>
<div class="a" style="left:2362px;top:742px;width:800px;height:2px;background:rgba(240,40,40,0.19)"></div>
<div class="a" style="left:3120px;top:714px;width:2px;height:28px;background:repeating-linear-gradient(180deg,#a80000 0 2px,transparent 2px 4px,#a80000 4px 6px)"></div>
<div class="t" style="left:3185.00px;top:717.35px;font-size:25px;color:#1c1c1c;letter-spacing:-0.67px;font-family:'Liberation Mono',monospace;">16px</div>
<div class="a" style="left:2362px;top:800px;width:800px;height:2px;background:rgba(240,40,40,0.19)"></div>
<div class="a" style="left:2362px;top:830px;width:800px;height:2px;background:rgba(240,40,40,0.19)"></div>
<div class="a" style="left:3120px;top:802px;width:2px;height:28px;background:repeating-linear-gradient(180deg,#a80000 0 2px,transparent 2px 4px,#a80000 4px 6px)"></div>
<div class="t" style="left:3185.00px;top:804.85px;font-size:25px;color:#1c1c1c;letter-spacing:-0.67px;font-family:'Liberation Mono',monospace;">16px</div>
<div class="a" style="left:2362px;top:952px;width:800px;height:2px;background:rgba(240,40,40,0.19)"></div>
<div class="a" style="left:2362px;top:966px;width:800px;height:2px;background:rgba(240,40,40,0.19)"></div>
<div class="a" style="left:3120px;top:954px;width:2px;height:12px;background:repeating-linear-gradient(180deg,#a80000 0 2px,transparent 2px 4px,#a80000 4px 6px)"></div>
<div class="t" style="left:3185.00px;top:950.85px;font-size:25px;color:#1c1c1c;letter-spacing:-0.50px;font-family:'Liberation Mono',monospace;">8px</div>
<div class="a" style="left:2362px;top:1008px;width:800px;height:2px;background:rgba(240,40,40,0.19)"></div>
<div class="a" style="left:2362px;top:1022px;width:800px;height:2px;background:rgba(240,40,40,0.19)"></div>
<div class="a" style="left:3120px;top:1010px;width:2px;height:12px;background:repeating-linear-gradient(180deg,#a80000 0 2px,transparent 2px 4px,#a80000 4px 6px)"></div>
<div class="t" style="left:3185.00px;top:1006.85px;font-size:25px;color:#1c1c1c;letter-spacing:-0.50px;font-family:'Liberation Mono',monospace;">8px</div>
<div class="a" style="left:2332px;top:1366px;width:830px;height:2px;background:rgba(240,40,40,0.19)"></div>
<div class="a" style="left:2332px;top:1412px;width:830px;height:2px;background:rgba(240,40,40,0.19)"></div>
<div class="a" style="left:3120px;top:1368px;width:2px;height:44px;background:repeating-linear-gradient(180deg,#a80000 0 2px,transparent 2px 4px,#a80000 4px 6px)"></div>
<div class="t" style="left:3185.00px;top:1382.85px;font-size:25px;color:#1c1c1c;letter-spacing:-0.67px;font-family:'Liberation Mono',monospace;">24px</div>
<div class="a" style="left:2332px;top:1480px;width:830px;height:2px;background:rgba(240,40,40,0.19)"></div>
<div class="a" style="left:2332px;top:1526px;width:830px;height:2px;background:rgba(240,40,40,0.19)"></div>
<div class="a" style="left:3120px;top:1482px;width:2px;height:44px;background:repeating-linear-gradient(180deg,#a80000 0 2px,transparent 2px 4px,#a80000 4px 6px)"></div>
<div class="t" style="left:3185.00px;top:1496.85px;font-size:25px;color:#1c1c1c;letter-spacing:-0.67px;font-family:'Liberation Mono',monospace;">24px</div>
<div class="a" style="left:922px;top:1700px;width:2px;height:179px;background:rgba(240,40,40,0.19)"></div>
<div class="a" style="left:2360px;top:1700px;width:2px;height:179px;background:rgba(240,40,40,0.19)"></div>
<div class="a" style="left:924px;top:1840px;width:1436px;height:2px;background:repeating-linear-gradient(90deg,#a80000 0 2px,transparent 2px 4px,#a80000 4px 6px)"></div>
<div class="t" style="left:1604.40px;top:1887.85px;font-size:25px;color:#1c1c1c;letter-spacing:-0.35px;font-family:'Liberation Mono',monospace;">720px</div>
</div>
</body></html>
